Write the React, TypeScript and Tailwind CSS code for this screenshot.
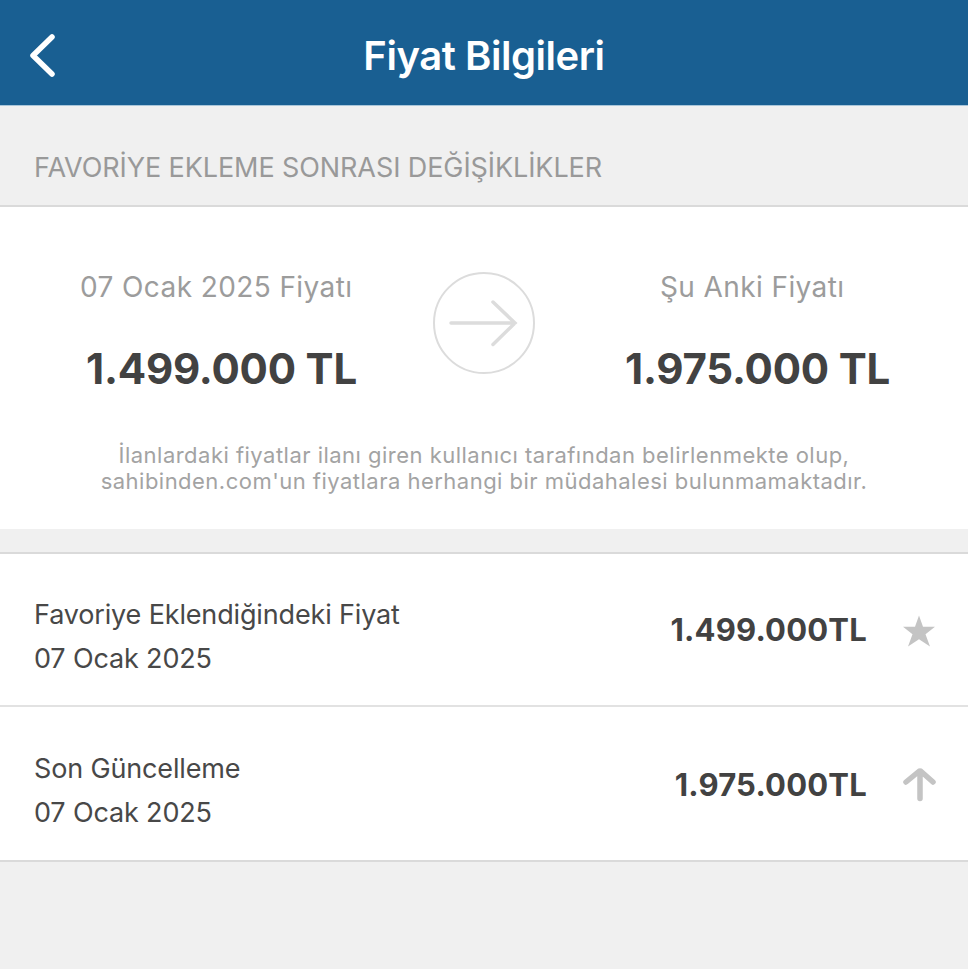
import { clsx } from "clsx";

interface HistoryItem {
  label: string;
  date: string;
  price: string;
  icon: "star" | "up";
}

const history: HistoryItem[] = [
  {
    label: "Favoriye Eklendiğindeki Fiyat",
    date: "07 Ocak 2025",
    price: "1.499.000TL",
    icon: "star",
  },
  {
    label: "Son Güncelleme",
    date: "07 Ocak 2025",
    price: "1.975.000TL",
    icon: "up",
  },
];

function RowIcon({ name }: { name: HistoryItem["icon"] }) {
  return (
    <svg viewBox="0 0 34 36" className="h-9 w-[34px] shrink-0 text-[#c4c4c4]">
      {name === "star" ? (
        <path
          d="M17 3.500l4 11.200h12l-9.500 7.500 4.500 12.300-11-7.200-11 7.200 4.500-12.300L1 14.700h12z"
          fill="currentColor"
        />
      ) : (
        <path
          d="M18 32.500V5M4 16L18 4.500 31 16"
          fill="none"
          stroke="currentColor"
          strokeWidth="5.500"
          strokeLinecap="round"
          strokeLinejoin="bevel"
        />
      )}
    </svg>
  );
}

export default function App() {
  return (
    <div className="min-h-screen w-full bg-[#f0f0f0] font-['Inter','Liberation_Sans',sans-serif] whitespace-nowrap">
      <header className="grid h-[106px] grid-cols-[100px_1fr_100px] items-center border-b border-[#a9c6da] bg-[#195f92] pt-[6px]">
        <button className="pl-[29px]" aria-label="Geri">
          <svg viewBox="0 0 28 44" className="h-11 w-7">
            <path
              d="M23 3L4 21.500l19 18.500"
              fill="none"
              stroke="white"
              strokeWidth="5.500"
              strokeLinecap="round"
              strokeLinejoin="round"
            />
          </svg>
        </button>
        <h1 className="text-center text-[40px] font-semibold tracking-[-0.45px] text-white">
          Fiyat Bilgileri
        </h1>
      </header>

      <h2 className="h-[99px] pt-[42px] pl-[34px] text-[27px] leading-[40px] tracking-[-0.09px] text-[#999]">
        FAVORİYE EKLEME SONRASI DEĞİŞİKLİKLER
      </h2>

      <section className="h-[324px] border-t-2 border-[#dadada] bg-white pt-[60px]">
        <div className="flex justify-between pr-[78px] pl-[80px]">
          <div className="w-[262px]">
            <p className="text-[28px] leading-[40px] tracking-[0.4px] text-[#9c9c9c]">
              07 Ocak 2025 Fiyatı
            </p>
            <p className="mt-[37px] pl-[6px] text-[42px] leading-[50px] font-bold tracking-[-0.2px] text-[#424242]">
              1.499.000 TL
            </p>
          </div>
          <svg viewBox="0 0 104 104" className="mt-[4px] h-[104px] w-[104px] text-[#dcdcdc]">
            <g fill="none" stroke="currentColor">
              <circle cx="52" cy="52" r="50" strokeWidth="2" />
              <path d="M19 52h64M61 31l22 21-22 21.500" strokeWidth="3.500" strokeLinecap="round" />
            </g>
          </svg>
          <div className="w-[265px]">
            <p className="pl-[35px] text-[28px] leading-[40px] tracking-[0.4px] text-[#9c9c9c]">
              Şu Anki Fiyatı
            </p>
            <p className="mt-[37px] text-[42px] leading-[50px] font-bold tracking-[-0.2px] text-[#424242]">
              1.975.000 TL
            </p>
          </div>
        </div>
        <p className="mt-[48px] text-center text-[22px] leading-[26px] tracking-[0.48px] text-[#a3a3a3]">
          İlanlardaki fiyatlar ilanı giren kullanıcı tarafından belirlenmekte olup,
          <br />
          sahibinden.com'un fiyatlara herhangi bir müdahalesi bulunmamaktadır.
        </p>
      </section>

      <ul className="mt-[23px] border-y-2 border-[#dadada] bg-white">
        {history.map((item, i) => (
          <li
            key={item.label}
            className={clsx(
              "flex items-center pr-[32px] pl-[34px]",
              i > 0 ? "h-[155px] border-t-2 border-[#e2e2e2] pt-px" : "h-[151px]"
            )}
          >
            <div className="mt-[14px] flex-1 text-[27px] leading-[44px] tracking-[-0.15px] text-[#484848]">
              <p>{item.label}</p>
              <p>{item.date}</p>
            </div>
            <span className="mt-[2px] mr-[35px] text-[31px] font-bold tracking-[0.2px] text-[#424242]">
              {item.price}
            </span>
            <RowIcon name={item.icon} />
          </li>
        ))}
      </ul>
    </div>
  );
}
